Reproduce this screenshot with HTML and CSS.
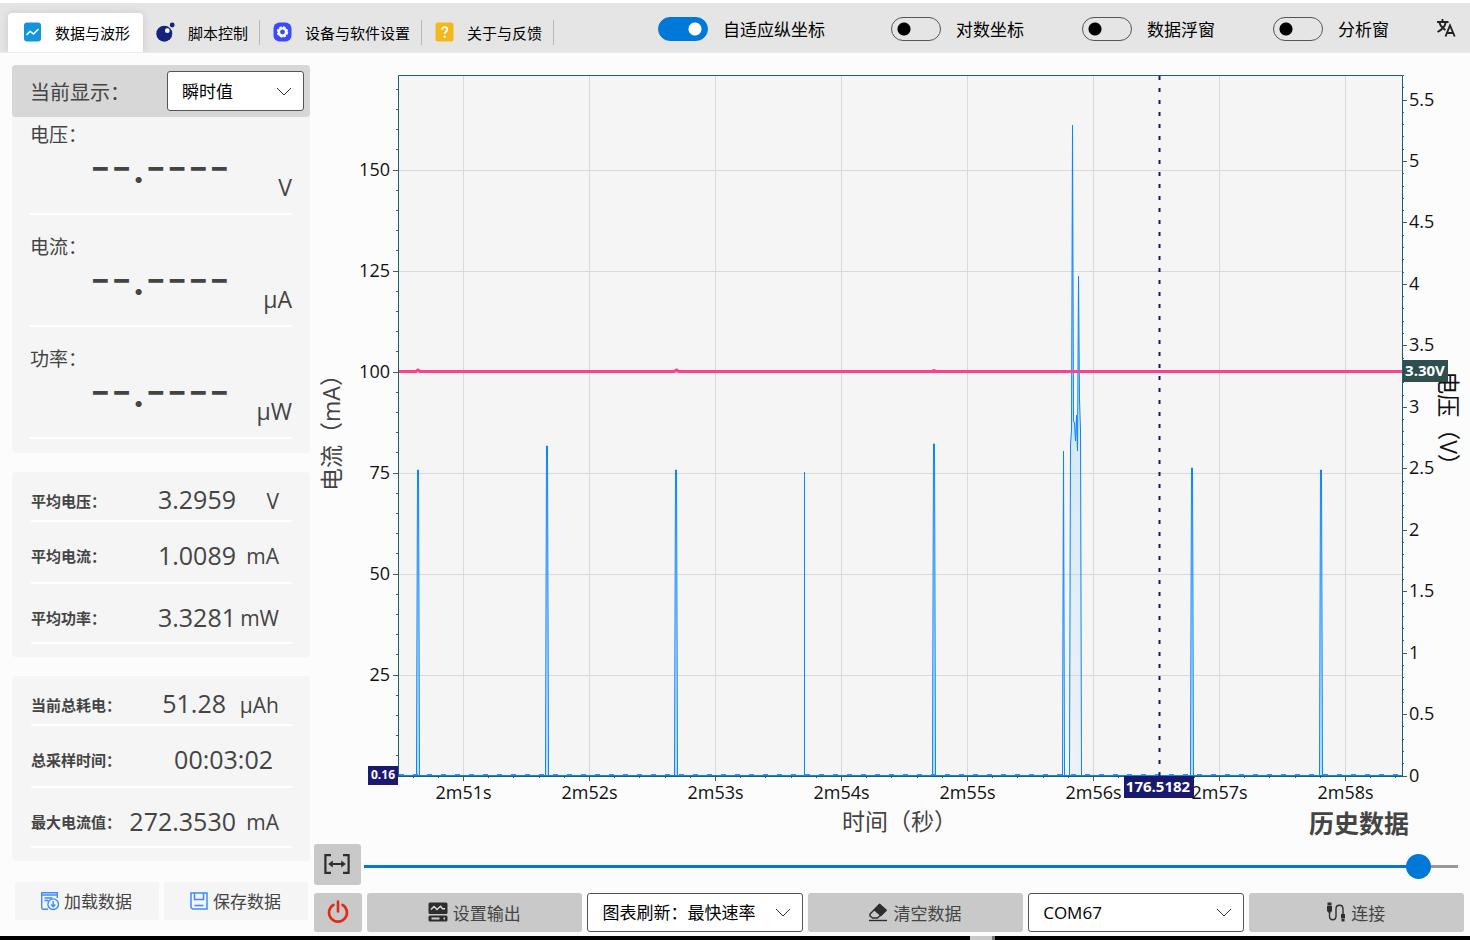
FILE: index.html
```html
<!DOCTYPE html>
<html lang="zh-CN">
<head>
<meta charset="utf-8">
<title>数据与波形</title>
<link rel="stylesheet" href="styles.css">
</head>
<body>
<header class="topbar">
  <nav class="tabs">
    <button class="tab tab-active" type="button">
      <svg class="tab-icon" viewBox="0 0 19 20"><rect x="1" y="0.500" width="17" height="19" rx="3" fill="#1296db"/><path d="M4 12.500l3.200-3.200 3.300 2.700L15 7.500" fill="none" stroke="#fff" stroke-width="1.600" stroke-linecap="round" stroke-linejoin="round"/></svg>
      数据与波形
    </button>
    <button class="tab" type="button">
      <svg class="tab-icon" viewBox="0 0 19 20"><circle cx="8.300" cy="11.700" r="8" fill="#14227a"/><circle cx="11.300" cy="8.700" r="2.400" fill="#fff"/><circle cx="16.200" cy="3" r="2.400" fill="#14227a"/></svg>
      脚本控制
    </button>
    <button class="tab" type="button">
      <svg class="tab-icon" viewBox="0 0 19 20"><rect x="0.500" y="0.500" width="18" height="19" rx="6" fill="#3a4bff"/><circle cx="9.500" cy="10" r="4.800" fill="#fff"/><circle cx="9.500" cy="10" r="4.900" fill="none" stroke="#fff" stroke-width="1.600" stroke-dasharray="2.500 1.350"/><circle cx="9.500" cy="10" r="2.400" fill="#3a4bff"/></svg>
      设备与软件设置
    </button>
    <button class="tab" type="button">
      <svg class="tab-icon" viewBox="0 0 19 20"><rect x="0.500" y="0.500" width="18" height="19" rx="2.500" fill="#f4b81c"/><path d="M7 7.800c0-3.600 5.600-3.400 5.300-.200-.200 1.900-2.500 2-2.600 4.200" fill="none" stroke="#fff" stroke-width="1.900"/><circle cx="9.600" cy="14.700" r="1.200" fill="#fff"/></svg>
      关于与反馈
    </button>
  </nav>
  <div class="tools">
    <label class="toggle toggle-first"><input type="checkbox" role="switch" checked>自适应纵坐标</label>
    <label class="toggle"><input type="checkbox" role="switch">对数坐标</label>
    <label class="toggle"><input type="checkbox" role="switch">数据浮窗</label>
    <label class="toggle"><input type="checkbox" role="switch">分析窗</label>
    <button class="lang" type="button" aria-label="语言">
      <svg viewBox="0 0 20 20" width="20" height="20"><path d="M1 4h11.500M6.500 1v3M9.800 4C9 8.500 5.500 12 1.500 14M3.500 4.500C4.300 8 7 10.500 9.500 12M9.500 18.500l4.500-11 4.700 11M11 15h6.200" fill="none" stroke="#222" stroke-width="1.900"/></svg>
    </button>
  </div>
</header>

<div class="workspace">
  <aside class="sidebar">
    <section class="card">
      <div class="mode">
        <label for="mode">当前显示：</label>
        <span class="picker mode-picker">
          <select id="mode"><option>瞬时值</option></select>
          <svg class="chevron" viewBox="0 0 16 9"><path d="M1 1l7 7 7-7"/></svg>
        </span>
      </div>
      <div class="readings">
        <div class="reading"><h2>电压：</h2><p><span class="live">--.----</span><span class="live-unit">V</span></p></div>
        <div class="reading"><h2>电流：</h2><p><span class="live">--.----</span><span class="live-unit">μA</span></p></div>
        <div class="reading"><h2>功率：</h2><p><span class="live">--.----</span><span class="live-unit">μW</span></p></div>
      </div>
    </section>
    <section class="card stats">
      <div class="stat"><span class="stat-name">平均电压：</span><span class="stat-value">3.2959</span><span class="stat-unit">V</span></div>
      <div class="stat"><span class="stat-name">平均电流：</span><span class="stat-value">1.0089</span><span class="stat-unit">mA</span></div>
      <div class="stat"><span class="stat-name">平均功率：</span><span class="stat-value">3.3281</span><span class="stat-unit">mW</span></div>
    </section>
    <section class="card stats">
      <div class="stat"><span class="stat-name">当前总耗电：</span><span class="stat-value">51.28</span><span class="stat-unit stat-unit-wide">μAh</span></div>
      <div class="stat"><span class="stat-name">总采样时间：</span><span class="stat-value stat-time">00:03:02</span></div>
      <div class="stat"><span class="stat-name">最大电流值：</span><span class="stat-value">272.3530</span><span class="stat-unit">mA</span></div>
    </section>
    <div class="file-actions">
      <button class="file-button" type="button">
        <svg viewBox="0 0 20 20" width="20" height="20" fill="none" stroke="#3b8cff" stroke-width="1.400"><path d="M8 18.300H3.200A1.500 1.500 0 0 1 1.700 17V1.700h15.600V7M1.700 4h15.600M4.500 7h8M4.500 9.500h4"/><circle cx="13.200" cy="13.200" r="5.300"/><path d="M13.200 10v5.600M11 13.600l2.200 2.200 2.200-2.200"/></svg>
        加载数据
      </button>
      <button class="file-button" type="button">
        <svg viewBox="0 0 20 20" width="20" height="20" fill="none" stroke="#3b8cff" stroke-width="1.500"><path d="M2 2h16v16H3.500L2 16.500zM5.500 2v6.500h9V2M5.500 14.500h9"/></svg>
        保存数据
      </button>
    </div>
  </aside>

  <main class="panel">
    <svg class="chart" id="chart" viewBox="314 60 1150 784" role="img" aria-label="电流与电压波形">
      <defs>
        <linearGradient id="burst" x1="0" y1="0" x2="0" y2="1"><stop offset="0" stop-color="#0a84ff" stop-opacity="0.500"/><stop offset="0.500" stop-color="#9fd4f5" stop-opacity="0.350"/><stop offset="1" stop-color="#cfe6fa" stop-opacity="0.200"/></linearGradient>
      </defs>
      <rect class="plot" x="398" y="75" width="1004" height="701"/>
      <g id="grid" class="grid"></g>
      <g id="pulses" class="current"></g>
      <path class="current" fill="url(#burst)" d="M1062.500 775L1063.500 451L1064.500 775M1069.500 775L1070.500 445L1071.500 430L1072.500 125L1073.500 421L1074.500 423L1075.500 441L1076.500 415L1077.500 451L1078.500 276L1079.500 400L1080.500 430L1081.500 775"/>
      <path class="current" fill="none" d="M399 775.500H1402"/>
      <path class="ripple" d="M399 774.500H1402"/>
      <path class="voltage" d="M399 371.500H416L418 370L420 371.500H674L676.500 370L679 371.500H932L934 370.500L936 371.500H1402"/>
      <path class="frame" d="M398.500 776V75.500H1402.500V776"/>
      <path class="frame" d="M398 776.500H1403"/>
      <g id="ticks" class="ticks"></g>
      <g id="labels" class="labels"></g>
      <path class="cursor" d="M1159.500 76V776"/>
      <text class="axis-title" text-anchor="middle" transform="translate(340 427) rotate(-90)">电流（mA）</text>
      <text class="axis-title axis-title-dark" text-anchor="middle" transform="translate(1440 424) rotate(90)">电压（V）</text>
      <text class="axis-title" x="842" y="830">时间（秒）</text>
      <rect class="tag tag-navy" x="368" y="766" width="30" height="19"/>
      <text class="tag-text tag-small" x="383" y="779">0.16</text>
      <rect class="tag tag-navy" x="1124" y="776" width="70" height="22"/>
      <text class="tag-text" x="1158" y="792">176.5182</text>
      <rect class="tag tag-slate" x="1403" y="360" width="45" height="22"/>
      <text class="tag-text" x="1425" y="376">3.30V</text>
      <text class="history" x="1309" y="833">历史数据</text>
    </svg>
    <div class="scrub">
      <button class="key fit" type="button" aria-label="适应宽度">
        <svg viewBox="0 0 26 20" width="26" height="20" fill="none" stroke="#2e2e2e" stroke-width="2.200"><path d="M7 1.200H1.400v17.600H7M19 1.200h5.600v17.600H19M6 10h14"/><path d="M8.800 6.500v7L4.200 10zM17.200 6.500v7l4.600-3.500z" fill="#2e2e2e" stroke="none"/></svg>
      </button>
      <input class="slider" type="range" min="0" max="1000" value="975" aria-label="时间位置">
    </div>
    <div class="controls">
      <button class="key" type="button" aria-label="电源">
        <svg viewBox="0 0 22 24" width="22" height="24" fill="none" stroke="#e02a16" stroke-width="2.600" stroke-linecap="round"><path d="M6.500 4.800a9 9 0 1 0 9 0M11 1.500v10"/></svg>
      </button>
      <button class="key" type="button">
        <svg viewBox="0 0 20 20" width="20" height="20"><rect x="0.500" y="0.500" width="19" height="11.500" rx="1.500" fill="#2e2e2e"/><path d="M3 7.500l3-3 3 3 3.500-3.200 2 2.500h2.500" fill="none" stroke="#ddd" stroke-width="1.500"/><rect x="0.500" y="13.500" width="19" height="6" rx="1.500" fill="#2e2e2e"/><path d="M3.500 16.500h8M15.500 16.500h1.500" stroke="#ccc" stroke-width="2"/></svg>
        设置输出
      </button>
      <span class="picker">
        <select aria-label="图表刷新"><option>图表刷新：最快速率</option></select>
        <svg class="chevron" viewBox="0 0 16 9"><path d="M1 1l7 7 7-7"/></svg>
      </span>
      <button class="key" type="button">
        <svg viewBox="0 0 20 20" width="20" height="20"><path d="M11.500 2.500L2 12v2l2.500 2h5L18 8.500z" fill="none" stroke="#2e2e2e" stroke-width="1.500" stroke-linejoin="round"/><path d="M11.500 1.500L19 8l-6 6.500L5.500 8z" fill="#2e2e2e"/><path d="M1 18.500h18" stroke="#2e2e2e" stroke-width="1.400"/></svg>
        清空数据
      </button>
      <span class="picker">
        <select aria-label="串口"><option>COM67</option></select>
        <svg class="chevron" viewBox="0 0 16 9"><path d="M1 1l7 7 7-7"/></svg>
      </span>
      <button class="key" type="button">
        <svg viewBox="0 0 20 20" width="20" height="20"><path d="M3.500 10v4c0 5 6.500 5 6.500 0V7c0-5 7-5 7 0v5" fill="none" stroke="#2e2e2e" stroke-width="1.400"/><path d="M1.500 0.500h4v3h-4zM1 4h5v4.500L5 10.500H2L1 8.500zM15 12h4v4.500h-4zM15.500 17h3v2.500h-3z" fill="#2e2e2e"/></svg>
        连接
      </button>
    </div>
  </main>
</div>
<footer class="edge"><span class="edge-mark"></span></footer>
<script src="chart.js"></script>
</body>
</html>
```
FILE: styles.css
```css
* { box-sizing: border-box; }

body {
  margin: 0;
  min-height: 100vh;
  display: flex;
  flex-direction: column;
  background: #fcfcfc;
  color: #444;
  font-family: "Open Sans", "Noto Sans CJK SC", sans-serif;
  font-size: 17px;
}

button, select, input { font: inherit; color: inherit; margin: 0; }
button { border: 0; background: none; padding: 0; cursor: pointer; white-space: nowrap; }
h2, p { margin: 0; font-weight: 400; }
svg { flex: none; }

.topbar {
  height: 53px;
  display: flex;
  justify-content: space-between;
  border-top: 3px solid #fff;
  border-bottom: 1px solid #ececec;
  background: #e5e5e5;
  color: #000;
}

.tabs { display: flex; align-items: flex-end; padding-left: 8px; }
.tab {
  position: relative;
  height: 39px;
  display: flex;
  align-items: center;
  gap: 13px;
  padding: 0 12px 1px 13px;
  font-size: 15px;
}
.tab::after {
  content: "";
  position: absolute;
  right: 0;
  top: 7px;
  width: 1px;
  height: 25px;
  background: #b8b8b8;
}
.tab-active {
  padding: 0 13px 1px 15px;
  border-radius: 4px 4px 0 0;
  background: #fff;
  box-shadow: 0 0 8px rgba(0, 0, 0, 0.12);
  clip-path: inset(-8px -8px 0 -8px);
}
.tab-active::after { display: none; }
.tab-icon { width: 19px; height: 20px; }

.tools { display: flex; align-items: center; gap: 58px; padding: 2px 14px 0 0; }
.toggle { display: flex; align-items: center; gap: 15px; white-space: nowrap; }
.toggle-first { margin-right: 8px; }
.toggle input {
  appearance: none;
  width: 50px;
  height: 24px;
  border: 1px solid #555;
  border-radius: 12px;
  background: radial-gradient(circle at 12px 11px, #000 6px, transparent 7px);
}
.toggle input:checked {
  border-color: #0078d7;
  background: radial-gradient(circle at 36px 11px, #fff 6px, #0078d7 7px);
}
.lang { height: 22px; margin-left: -11px; }

.workspace { flex: 1; display: flex; gap: 4px; padding: 0 6px 4px 12px; }
.sidebar { width: 298px; flex: none; padding-top: 12px; }
.card { margin-bottom: 19px; border-radius: 4px; background: #f5f5f5; }

.mode {
  height: 52px;
  display: flex;
  align-items: center;
  justify-content: space-between;
  padding: 0 6px 0 18px;
  border-radius: 4px;
  background: #d7d7d7;
  font-size: 20px;
}
.mode-picker { width: 137px; height: 40px; font-size: 17px; }

.picker { display: grid; align-items: center; color: #000; }
.picker select {
  grid-area: 1 / 1;
  width: 100%;
  height: 100%;
  appearance: none;
  border: 1px solid #555;
  border-radius: 3px;
  background: #fff;
  padding: 0 36px 0 14px;
}
.chevron {
  grid-area: 1 / 1;
  justify-self: end;
  width: 16px;
  height: 9px;
  margin-right: 12px;
  fill: none;
  stroke: #333;
  pointer-events: none;
}

.readings { display: grid; gap: 20px; padding: 6px 18px 14px 18px; }
.reading { border-bottom: 2px solid #fff; }
.reading h2 { font-size: 19px; line-height: 24px; }
.reading p { height: 66px; display: flex; justify-content: space-between; }
.live {
  width: 200px;
  text-align: right;
  font-family: Inter, sans-serif;
  font-size: 46px;
  line-height: 38px;
}
.live-unit { align-self: flex-end; padding-bottom: 11px; font-size: 23px; line-height: 30px; }

.stats { padding: 0 18px 13px 19px; }
.stat {
  height: 62px;
  display: flex;
  align-items: center;
  padding: 0 13px 7px 0;
  border-bottom: 2px solid #fff;
  line-height: 36px;
}
.stat:first-child { height: 50px; padding-bottom: 0; padding-top: 6px; }
.stat:nth-child(2) { padding-top: 12px; }
.stat:last-child { height: 60px; padding-top: 14px; }
.stat-name { flex: 1; padding-top: 3px; font-size: 15px; font-weight: 700; white-space: nowrap; }
.stat-value { font-size: 25px; }
.stat-time { margin-right: 6px; }
.stat-unit { width: 43px; padding-top: 3px; font-size: 21px; text-align: right; }
.stat-unit-wide { width: 53px; }

.file-actions { display: flex; gap: 5px; padding: 2px 2px 0 3px; }
.file-button {
  flex: 1;
  height: 38px;
  display: flex;
  align-items: center;
  justify-content: center;
  gap: 4px;
  padding: 0 2px 1px 0;
  border-radius: 3px;
  background: #f5f5f5;
}

.panel { flex: 1; min-width: 0; padding-top: 7px; }
.chart { display: block; width: 100%; height: auto; }
.plot { fill: #f5f5f5; }
.grid { stroke: #d9d9d9; }
.current { stroke: #0a84ff; }
.pulse { fill: #bfe0ff; }
.ripple { stroke: #3b8fe0; stroke-dasharray: 5 9; }
.voltage { fill: none; stroke: #ff3f8f; stroke-width: 3; }
.frame { fill: none; stroke: #1b6070; }
.ticks { stroke: #555; }
.labels { fill: #111; font-size: 18px; }
.cursor { stroke: #191970; stroke-width: 2; stroke-dasharray: 4 8; }
.axis-title { fill: #444; font-size: 23px; }
.axis-title-dark { fill: #111; }
.tag-navy { fill: #191970; }
.tag-slate { fill: #2f4f4f; }
.tag-text { fill: #fff; font-size: 15px; font-weight: 700; text-anchor: middle; }
.tag-small { font-size: 12px; }
.history { fill: #444; font-size: 25px; font-weight: 700; }

.scrub { display: flex; align-items: center; gap: 3px; padding-right: 6px; }
.key {
  height: 39px;
  display: flex;
  align-items: center;
  justify-content: center;
  gap: 5px;
  padding: 0 1px 1px 0;
  border-radius: 3px;
  background: #c9c9c9;
}
.fit { width: 47px; height: 41px; flex: none; }
.slider {
  flex: 1;
  min-width: 0;
  height: 25px;
  margin-top: 3px;
  appearance: none;
  background: linear-gradient(90deg, #0078d7 96%, #999 96%) center / 100% 3px no-repeat;
}
.slider::-webkit-slider-thumb {
  appearance: none;
  width: 25px;
  height: 25px;
  border-radius: 50%;
  background: #0078d7;
}

.controls {
  display: grid;
  grid-template-columns: 48px repeat(5, minmax(0, 1fr));
  gap: 5px;
  margin-top: 8px;
}

.edge { height: 4px; display: flex; background: #000; }
.edge-mark { width: 25px; margin-left: 66%; background: #c9c9c9; border-right: 3px solid #777; }
```
FILE: chart.js
```js
const NS = "http://www.w3.org/2000/svg";
const add = (id, tag, attrs, text) => {
  const el = document.createElementNS(NS, tag);
  for (const key in attrs) el.setAttribute(key, attrs[key]);
  if (text !== undefined) el.textContent = text;
  document.getElementById(id).appendChild(el);
};
const line = (id, d) => add(id, "path", { d });
const snap = (v) => Math.floor(v) + 0.5;

for (let i = 0; i < 8; i++) {
  const x = 463.5 + i * 126;
  line("grid", `M${x} 76V776`);
  add("labels", "text", { x, y: 799, "text-anchor": "middle" }, `2m${51 + i}s`);
}
for (let i = -2; i <= 37; i++) {
  line("ticks", `M${snap(463.5 + i * 25.2)} 777v${i % 5 === 0 ? 4 : 1}`);
}

for (let i = 0; i <= 34; i++) {
  const y = snap(776 - i * 20.2);
  const major = i % 5 === 0;
  line("ticks", `M398 ${y}h${major ? -5 : -2}`);
  if (major && i > 0) {
    line("grid", `M399 ${y}H1402`);
    add("labels", "text", { x: 390, y: y + 5, "text-anchor": "end" }, i * 5);
  }
}

for (let i = 0; i <= 57; i++) {
  const y = snap(776 - i * 12.29);
  const major = i % 5 === 0;
  line("ticks", `M1403 ${y}h${major ? 4 : 1}`);
  if (major) add("labels", "text", { x: 1409, y: y + 5 }, i / 10);
}

const pulses = [[418, 470], [547, 446], [676, 470], [934, 444], [1192, 468], [1321, 470]];
for (const [x, top] of pulses) {
  add("pulses", "path", { class: "pulse", d: `M${x - 1.5} 775L${x - 0.5} ${top}H${x + 0.5}L${x + 1.5} 775` });
}
line("pulses", "M804.5 775V472");
```
